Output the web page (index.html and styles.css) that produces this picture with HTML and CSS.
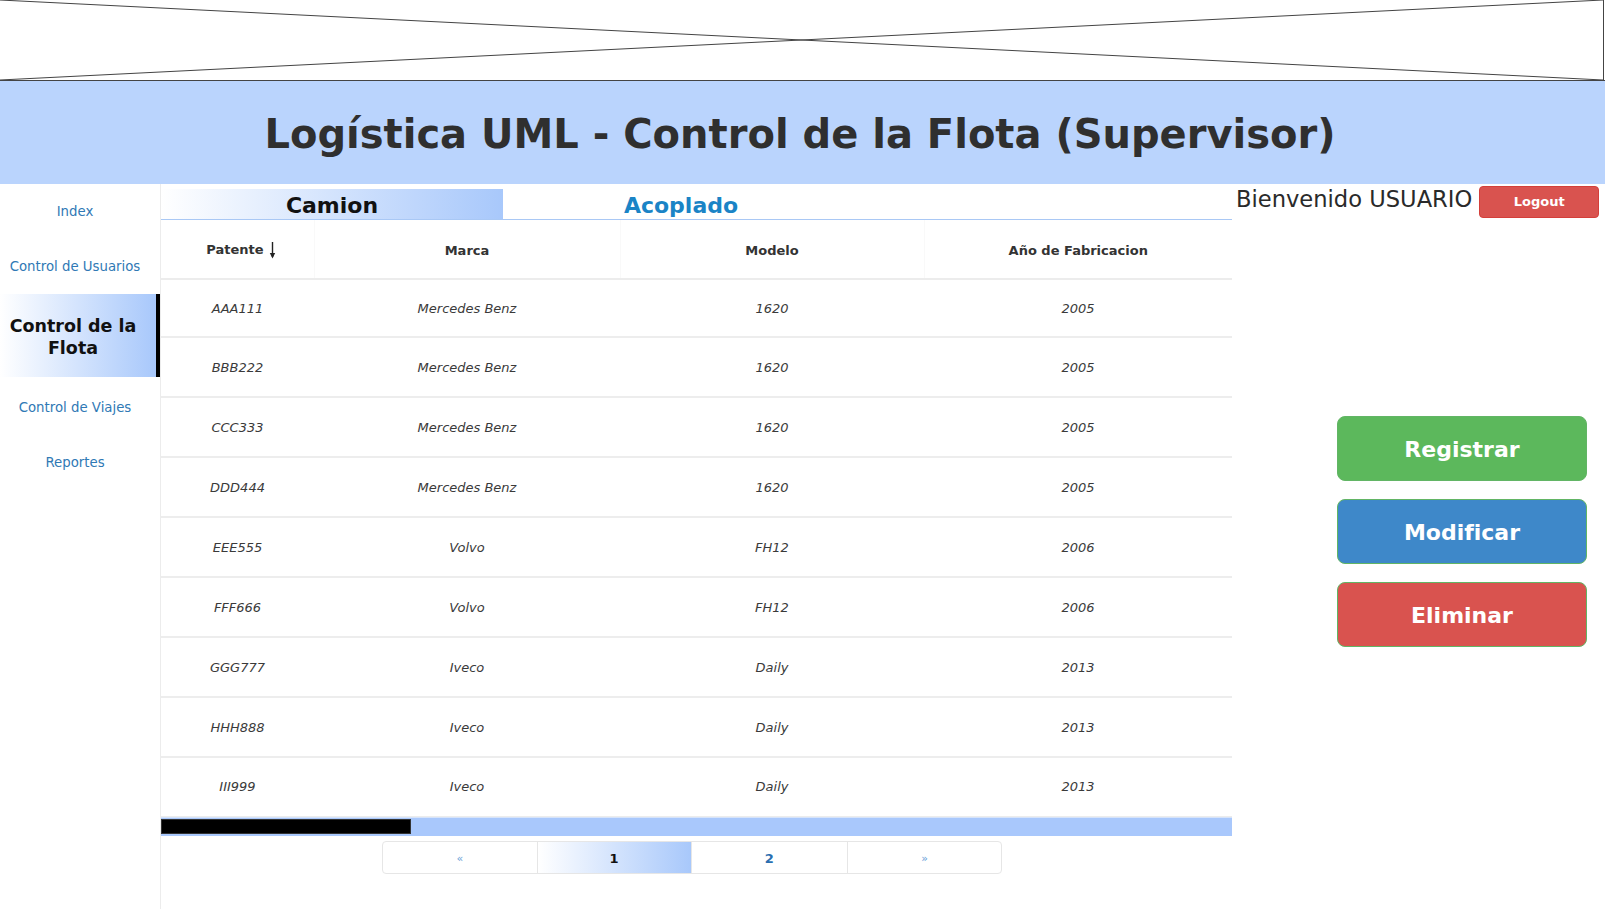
FILE: index.html
```html
<!DOCTYPE html>
<html lang="es">
<head>
<meta charset="utf-8">
<title>Logística UML - Control de la Flota</title>
<link rel="stylesheet" href="styles.css">
</head>
<body>
<div class="banner">
  <svg class="banner-x" viewBox="0 0 1605 80" preserveAspectRatio="none" width="1605" height="80">
    <line x1="0" y1="0" x2="1603" y2="80" stroke="#444" stroke-width="1"/>
    <line x1="1603" y1="0" x2="0" y2="80" stroke="#444" stroke-width="1"/>
    <line x1="1603.5" y1="0" x2="1603.5" y2="80" stroke="#444" stroke-width="1"/>
  </svg>
</div>
<header class="page-header">
  <h1>Logística UML - Control de la Flota (Supervisor)</h1>
</header>
<div class="main">
  <nav class="sidebar">
    <a class="nav-item" href="#">Index</a>
    <a class="nav-item" href="#">Control de Usuarios</a>
    <a class="nav-item active" href="#">Control de la<br>Flota</a>
    <a class="nav-item" href="#">Control de Viajes</a>
    <a class="nav-item" href="#">Reportes</a>
  </nav>
  <section class="content">
    <div class="tabs">
      <div class="tab tab-active">Camion</div>
      <div class="tab tab-other">Acoplado</div>
    </div>
    <table class="grid">
      <colgroup>
        <col class="c1"><col class="c2"><col class="c3"><col class="c4">
      </colgroup>
      <thead>
        <tr>
          <th class="th-sort">Patente <svg class="sort-arrow" width="7" height="17" viewBox="0 0 7 17"><line x1="3.5" y1="0" x2="3.5" y2="15" stroke="#222" stroke-width="1.4"/><path d="M0.8 11 L3.5 16.5 L6.2 11 Z" fill="#222"/></svg></th>
          <th>Marca</th>
          <th>Modelo</th>
          <th>Año de Fabricacion</th>
        </tr>
      </thead>
      <tbody>
        <tr><td>AAA111</td><td>Mercedes Benz</td><td>1620</td><td>2005</td></tr>
        <tr><td>BBB222</td><td>Mercedes Benz</td><td>1620</td><td>2005</td></tr>
        <tr><td>CCC333</td><td>Mercedes Benz</td><td>1620</td><td>2005</td></tr>
        <tr><td>DDD444</td><td>Mercedes Benz</td><td>1620</td><td>2005</td></tr>
        <tr><td>EEE555</td><td>Volvo</td><td>FH12</td><td>2006</td></tr>
        <tr><td>FFF666</td><td>Volvo</td><td>FH12</td><td>2006</td></tr>
        <tr><td>GGG777</td><td>Iveco</td><td>Daily</td><td>2013</td></tr>
        <tr><td>HHH888</td><td>Iveco</td><td>Daily</td><td>2013</td></tr>
        <tr><td>III999</td><td>Iveco</td><td>Daily</td><td>2013</td></tr>
      </tbody>
    </table>
    <div class="hscroll"><div class="hscroll-thumb"></div></div>
    <div class="pager">
      <a class="page page-arrow" href="#">«</a>
      <a class="page page-current" href="#">1</a>
      <a class="page page-num" href="#">2</a>
      <a class="page page-arrow" href="#">»</a>
    </div>
  </section>
  <aside class="side-panel">
    <div class="welcome">
      <span class="welcome-text">Bienvenido USUARIO</span>
      <button class="btn-logout">Logout</button>
    </div>
    <div class="actions">
      <button class="action action-green">Registrar</button>
      <button class="action action-blue">Modificar</button>
      <button class="action action-red">Eliminar</button>
    </div>
  </aside>
</div>
</body>
</html>
```
FILE: styles.css
```css
* { box-sizing: border-box; }
html, body {
  margin: 0;
  padding: 0;
  background: #fff;
  font-family: "DejaVu Sans", Verdana, sans-serif;
  color: #333;
}
.banner {
  height: 81px;
  border-bottom: 1px solid #444;
  overflow: hidden;
}
.banner-x { display: block; }
.page-header {
  height: 103px;
  background: #bad4fd;
  display: flex;
  align-items: center;
  justify-content: center;
}
.page-header h1 {
  margin: 0;
  font-size: 40px;
  font-weight: bold;
  color: #2f2f2f;
  line-height: 1;
  padding-top: 2px;
  padding-right: 5px;
}
.main {
  display: flex;
  min-height: 725px;
}
.sidebar {
  width: 160px;
  flex: none;
  display: flex;
  flex-direction: column;
}
.nav-item {
  height: 55px;
  display: flex;
  align-items: center;
  justify-content: center;
  text-align: center;
  font-size: 13.3px;
  color: #3079b5;
  text-decoration: none;
  padding-right: 10px;
  padding-bottom: 1px;
}
.nav-item.active {
  height: 83px;
  margin-bottom: 3px;
  font-size: 17.5px;
  font-weight: bold;
  color: #111;
  line-height: 22px;
  padding-top: 3px;
  padding-bottom: 0;
  background: linear-gradient(to right, #ffffff, #a8c8fb);
  border-right: 4px solid #000;
}
.content {
  width: 1072px;
  flex: none;
  border-left: 1px solid #ececec;
  padding-top: 5px;
}
.tabs {
  display: flex;
  height: 31px;
  border-bottom: 1px solid #a9c8f5;
}
.tab {
  display: flex;
  align-items: center;
  justify-content: center;
  font-size: 22px;
  font-weight: bold;
  padding-top: 3px;
}
.tab-active {
  width: 342px;
  color: #111;
  background: linear-gradient(to right, #ffffff, #a8c8fb);
}
.tab-other {
  width: 356px;
  color: #1a84c6;
}
.grid {
  width: 1071px;
  border-collapse: collapse;
  table-layout: fixed;
}
.c1 { width: 153px; }
.c2 { width: 306px; }
.c3 { width: 304px; }
.c4 { width: 308px; }
.grid th {
  height: 59px;
  font-size: 13px;
  font-weight: bold;
  color: #333;
  text-align: center;
  border-bottom: 2px solid #ececec;
  border-left: 1px solid #f9f9f9;
  padding: 2px 0 0;
}
.grid th:first-child { border-left: none; }
.grid th.th-sort { padding-left: 8px; }
.sort-arrow {
  vertical-align: -5px;
  margin-left: 1px;
}
.grid td {
  height: 60px;
  font-size: 13px;
  font-style: italic;
  color: #3a3a3a;
  text-align: center;
  border-bottom: 2px solid #ededed;
  padding: 0;
}
.grid tbody tr:first-child td { height: 58px; }
.grid tbody tr:last-child td { border-bottom: 1px solid #ececec; height: 59px; }
.hscroll {
  height: 19px;
  background: #a9c8fc;
  padding: 1px 0 2px;
  border-top: 1px solid #d6e4fb;
}
.hscroll-thumb {
  width: 250px;
  height: 100%;
  background: #000;
  border: 1px solid #333;
}
.pager {
  display: flex;
  margin: 5px 0 0 221px;
  width: 620px;
  height: 33px;
  border: 1px solid #e6e6e6;
  border-radius: 4px;
  overflow: hidden;
}
.page {
  width: 154px;
  display: flex;
  align-items: center;
  justify-content: center;
  text-decoration: none;
  font-weight: bold;
  font-size: 13px;
  border-left: 1px solid #e6e6e6;
  padding-top: 2px;
}
.page:first-child { border-left: none; }
.page-arrow { font-size: 11px; color: #6a9fd8; font-weight: normal; }
.page-current {
  color: #111;
  background: linear-gradient(to right, #ffffff, #a8c8fb);
}
.page-num { color: #2a6fb0; width: 157px; }
.side-panel {
  flex: 1;
  padding-top: 1px;
}
.welcome {
  display: flex;
  align-items: center;
  height: 33px;
  padding-left: 4px;
}
.welcome-text {
  font-size: 22.6px;
  color: #2a2a2a;
  margin-top: -6px;
}
.btn-logout {
  margin-left: 7px;
  width: 120px;
  height: 32px;
  background: #d9534f;
  color: #fff;
  border: 1px solid #d43f3a;
  border-radius: 4px;
  font-family: "DejaVu Sans", Verdana, sans-serif;
  font-weight: bold;
  font-size: 13px;
}
.actions {
  display: flex;
  flex-direction: column;
  gap: 18px;
  padding: 198px 0 0 105px;
}
.action {
  width: 250px;
  height: 65px;
  border-radius: 8px;
  border: 1px solid #62b565;
  color: #fff;
  font-family: "DejaVu Sans", Verdana, sans-serif;
  font-size: 22px;
  font-weight: bold;
  padding-top: 2px;
}
.action-green { background: #5cb85c; }
.action-blue { background: #3e88c9; }
.action-red { background: #d9534f; }
```
